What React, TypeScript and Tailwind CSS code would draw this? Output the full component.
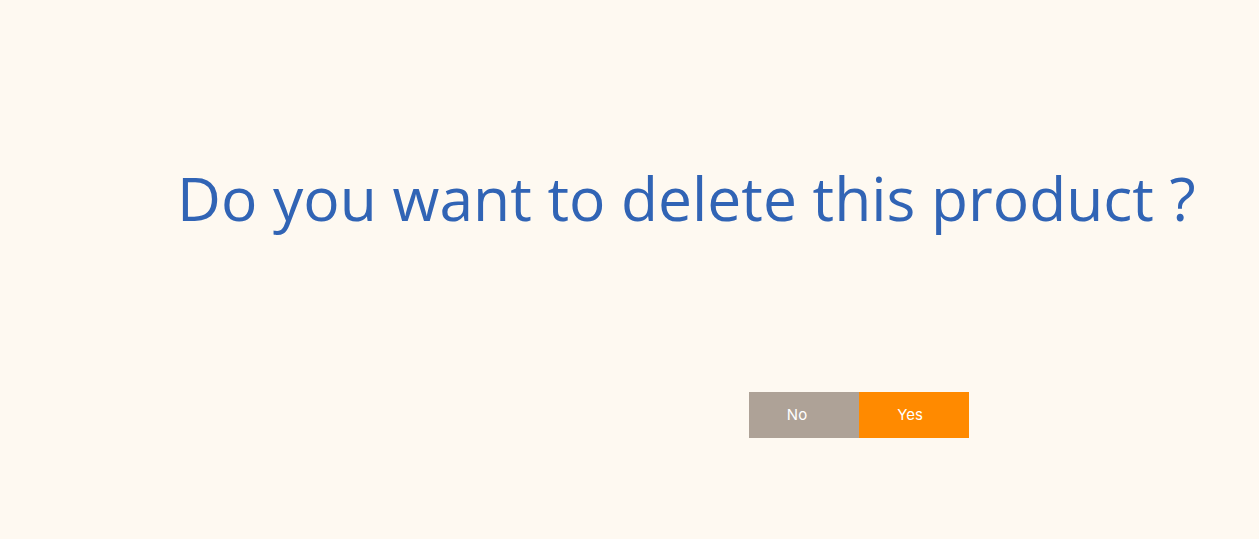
export default function App() {
  return (
    <div className="min-h-[539px] w-full bg-[#fef9f1] flex flex-col">
      <h1 className="pt-[168px] pl-[177px] text-[60.5px] leading-[60px] font-normal text-[#3164b5] whitespace-nowrap font-['Open_Sans',sans-serif]">
        Do you want to delete this product ?
      </h1>
      <div className="mt-[164px] pl-[749px] flex font-['Inter',sans-serif] text-[15px] font-normal text-white">
        <button className="w-[110px] h-[46px] bg-[#aea297] pr-[14px]">No</button>
        <button className="w-[110px] h-[46px] bg-[#ff8a00] pr-[8px]">Yes</button>
      </div>
    </div>
  );
}
